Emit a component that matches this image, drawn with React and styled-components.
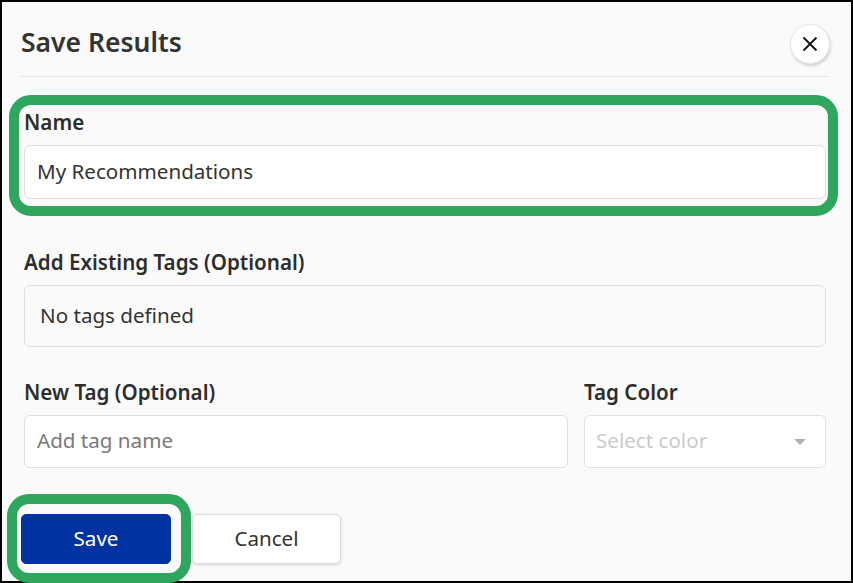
import styled, { createGlobalStyle } from 'styled-components';

const GlobalStyle = createGlobalStyle`
  * { box-sizing: border-box; }
  body {
    margin: 0;
    background: #fafafa;
    font-family: "Noto Sans", "Open Sans", sans-serif;
    color: #2d2d2d;
  }
`;

const Frame = styled.div`
  width: 853px;
  height: 583px;
  border: 2px solid #000;
  background: #fafafa;
  padding: 0 22px 0 19px;
`;

const Header = styled.div`
  display: flex;
  justify-content: space-between;
  align-items: flex-start;
  padding: 22px 0 12px 0;
  border-bottom: 1px solid #e2e2e2;
`;

const Title = styled.h2`
  margin: 0;
  font-size: 26.5px;
  line-height: 36px;
  font-weight: 600;
  color: #333;
`;

const CloseButton = styled.button`
  width: 40px;
  height: 40px;
  border-radius: 50%;
  border: 1px solid #e6e6e6;
  background: #fff;
  box-shadow: 1px 2px 3px rgba(0, 0, 0, 0.16);
  display: flex;
  align-items: center;
  justify-content: center;
  padding: 0;
  margin-right: -1px;
`;

const Body = styled.div`
  padding: 0 3px;
`;

const Field = styled.div`
  position: relative;
  margin-top: ${props => props.$top}px;
`;

// green annotation ring drawn over a part of the form
const Highlight = styled.div`
  position: relative;
  &::before {
    content: '';
    position: absolute;
    top: ${props => props.$inset[0]}px;
    right: ${props => props.$inset[1]}px;
    bottom: ${props => props.$inset[2]}px;
    left: ${props => props.$inset[3]}px;
    border: 10px solid #2fa65d;
    border-radius: 22px;
    pointer-events: none;
  }
`;

const Label = styled.label`
  display: block;
  font-size: 20.6px;
  line-height: 30px;
  font-weight: 600;
  color: #2d2d2d;
  margin-bottom: 8px;
`;

const Input = styled.input`
  display: block;
  width: 100%;
  height: ${props => props.$h || 53}px;
  border: 1px solid #dedede;
  border-radius: 6px;
  background: #fff;
  padding: 0 12px 3px 12px;
  font-family: inherit;
  font-size: 20.6px;
  color: #333;
  outline: none;
  &::placeholder {
    color: #7a7a7a;
  }
`;

const TagBox = styled.div`
  display: flex;
  align-items: center;
  height: 62px;
  border: 1px solid #dedede;
  border-radius: 6px;
  background: #fafafa;
  padding: 0 15px 3px 15px;
  font-size: 20.6px;
  color: #333;
`;

const Row = styled.div`
  display: grid;
  grid-template-columns: 1fr 242px;
  gap: 16px;
  margin-top: 30px;
`;

const Select = styled.div`
  display: flex;
  align-items: center;
  justify-content: space-between;
  height: 53px;
  border: 1px solid #e2e2e2;
  border-radius: 6px;
  background: #fff;
  padding: 0 19px 3px 11px;
  font-size: 20.6px;
  color: #cbcbcb;
`;

const Caret = styled.span`
  width: 0;
  height: 0;
  border-left: 6px solid transparent;
  border-right: 6px solid transparent;
  border-top: 6px solid #b3b3b3;
  margin-top: 4px;
`;

const Actions = styled.div`
  display: flex;
  gap: 21px;
  margin-top: 46px;
`;

const Button = styled.button`
  width: ${props => (props.$primary ? 150 : 149)}px;
  height: 50px;
  border-radius: 5px;
  padding: 0 0 3px 0;
  font-family: inherit;
  font-size: 20.6px;
  border: 1px solid ${props => (props.$primary ? '#0033a1' : '#dcdcdc')};
  background: ${props => (props.$primary ? '#0033a1' : '#fff')};
  color: ${props => (props.$primary ? '#fff' : '#333')};
  box-shadow: ${props => (props.$primary ? 'none' : '0 1px 3px rgba(0,0,0,0.15)')};
`;

function CloseIcon() {
  return (
    <svg width="16" height="16" viewBox="0 0 16 16">
      <path d="M1.5 1.5 L14.5 14.5 M14.5 1.5 L1.5 14.5" stroke="#111" strokeWidth="1.8" />
    </svg>
  );
}

export default function App() {
  return (
    <>
      <GlobalStyle />
      <Frame>
        <Header>
          <Title>Save Results</Title>
          <CloseButton aria-label="Close">
            <CloseIcon />
          </CloseButton>
        </Header>
        <Body>
          <Field $top={30}>
            <Highlight $inset={[-12, -12, -17, -15]}>
              <Label>Name</Label>
              <Input $h={54} defaultValue="My Recommendations" />
            </Highlight>
          </Field>
          <Field $top={48}>
            <Label>Add Existing Tags (Optional)</Label>
            <TagBox>No tags defined</TagBox>
          </Field>
          <Row>
            <div>
              <Label>New Tag (Optional)</Label>
              <Input placeholder="Add tag name" />
            </div>
            <div>
              <Label>Tag Color</Label>
              <Select>
                <span>Select color</span>
                <Caret />
              </Select>
            </div>
          </Row>
        </Body>
        <Actions>
          <Highlight $inset={[-20, -20, -19, -14]}>
            <Button $primary>Save</Button>
          </Highlight>
          <Button>Cancel</Button>
        </Actions>
      </Frame>
    </>
  );
}
